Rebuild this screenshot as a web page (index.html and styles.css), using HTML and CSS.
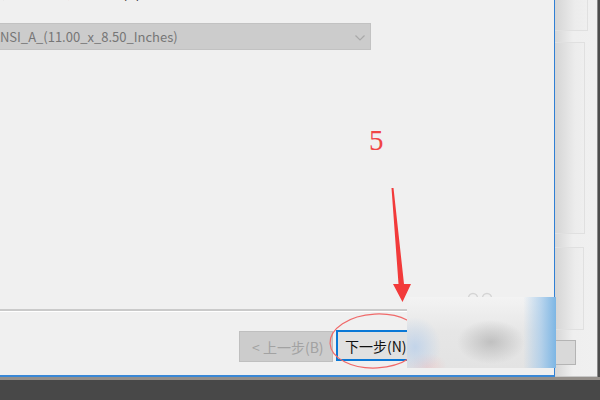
FILE: index.html
```html
<!DOCTYPE html>
<html lang="zh-CN">
<head>
    <meta charset="UTF-8">
    <title>添加打印机</title>
    <link rel="stylesheet" href="styles.css">
</head>
<body>
<div class="screen">
    <div class="desk">
        <div class="dialog">
            <div class="cut-label">选择默认纸张大小(S):</div>
            <div class="combo">
                <span>ANSI_A_(11.00_x_8.50_Inches)</span>
                <svg class="chevron" width="10" height="6" viewBox="0 0 10 6">
                    <polyline points="0.5,0.5 5,5 9.5,0.5" fill="none" stroke="#a9a9a9" stroke-width="1.2"/>
                </svg>
            </div>
            <div class="spacer"></div>
            <div class="sep"></div>
            <div class="footer">
                <button class="btn btn-off">&lt; 上一步(B)</button>
                <button class="btn btn-next">下一步(N)</button>
            </div>
        </div>
        <div class="side">
            <div class="box box-top"></div>
            <div class="box box-mid"></div>
            <div class="box box-low"></div>
            <div class="side-btn"></div>
        </div>
        <div class="edge"></div>
    </div>
    <div class="shadow-line"></div>
    <div class="taskbar"></div>

    <!-- annotation layer -->
    <svg class="marks" width="600" height="400" viewBox="0 0 600 400">
        <circle cx="473" cy="298" r="4.5" fill="none" stroke="#d4d4d4" stroke-width="1.5"/>
        <circle cx="487" cy="298" r="4.5" fill="none" stroke="#d4d4d4" stroke-width="1.5"/>
        <ellipse cx="376" cy="341" rx="46" ry="27" transform="rotate(-3 376 341)"
                 fill="none" stroke="#f06a6a" stroke-width="1.2"/>
        <polygon points="391.5,188 393.5,188 404,284 411,284 402.5,302 393,284 398.5,284" fill="#f23a3a"/>
    </svg>
    <div class="step">5</div>
    <div class="blur"></div>
</div>
</body>
</html>
```

FILE: styles.css
```css
body {
    margin: 0;
    padding: 0;
    background-color: #484848;
    font-family: "Noto Sans CJK SC", "Noto Sans", sans-serif;
}

.screen {
    position: relative;
    width: 600px;
    height: 400px;
    overflow: hidden;
}

.desk {
    display: flex;
    height: 377px;
    background-color: #f0f0f0;
}

/* dialog */
.dialog {
    width: 555px;
    display: flex;
    flex-direction: column;
    border-right: 1px solid #2f7fd4;
    border-bottom: 2px solid #3a88d6;
    background-color: #f0f0f0;
    box-sizing: border-box;
    height: 377px;
    overflow: hidden;
}

.cut-label {
    height: 18px;
    margin-top: -16px;
    font-size: 15px;
    line-height: 16px;
    color: #1a1a1a;
    padding-left: 2px;
    white-space: nowrap;
}

.combo {
    display: flex;
    align-items: center;
    justify-content: space-between;
    width: 388px;
    height: 27px;
    margin-top: 21px;
    margin-left: -17px;
    padding: 0 5px 0 8px;
    box-sizing: border-box;
    background-color: #cccccc;
    border: 1px solid #c2c2c2;
    font-size: 13px;
    color: #767676;
}

.chevron {
    display: block;
    margin-top: 2px;
}

.spacer {
    flex: 1;
}

.sep {
    height: 1px;
    border-top: 2px solid #cacaca;
    background-color: #ffffff;
}

.footer {
    display: flex;
    gap: 3px;
    padding: 18px 0 13px 239px;
}

.btn {
    height: 31px;
    font-family: "Noto Sans CJK SC", "Noto Sans", sans-serif;
    font-size: 14px;
    box-sizing: border-box;
    margin: 0;
    text-align: left;
}

.btn-off {
    width: 94px;
    background-color: #cccccc;
    border: 1px solid #bfbfbf;
    color: #a2a2a2;
    padding: 0 0 0 12px;
    margin-top: 1px;
}

.btn-next {
    width: 94px;
    background-color: #e1e1e1;
    border: 2px solid #0a78d6;
    color: #111111;
    padding: 0 0 0 7px;
}

/* right-hand window edge */
.side {
    flex: 1;
    display: flex;
    flex-direction: column;
    background: linear-gradient(to right, #d6d6d6, #efefef 18px, #f0f0f0);
    border-bottom: 1px solid #c8c8c8;
}

.box {
    border: 1px solid #e0e0e0;
    border-left: none;
    background: linear-gradient(to right, #d5d5d5, #ececec 20px, #efefef);
}

.box-top {
    width: 32px;
    height: 40px;
    margin-top: -11px;
}

.box-mid {
    width: 29px;
    height: 190px;
    margin-top: 11px;
}

.box-low {
    width: 28px;
    height: 81px;
    margin-top: 13px;
}

.side-btn {
    width: 20px;
    height: 23px;
    margin-top: 10px;
    border: 1px solid #b4b4b4;
    border-left: none;
    background-color: #d9d9d9;
}

.edge {
    width: 2px;
    background-color: #4c4c4c;
    border-left: 1px solid #8a8a8a;
}

.shadow-line {
    height: 3px;
    background-color: #948f8a;
}

.taskbar {
    height: 20px;
    background-color: #484848;
}

/* annotations */
.marks {
    position: absolute;
    left: 0;
    top: 0;
}

.step {
    position: absolute;
    left: 369px;
    top: 122px;
    font-family: "Liberation Serif", "DejaVu Serif", serif;
    font-size: 29px;
    line-height: 36px;
    color: #f04545;
}

.blur {
    position: absolute;
    left: 407px;
    top: 297px;
    width: 149px;
    height: 71px;
    background:
        radial-gradient(ellipse 34px 22px at 84px 45px, rgba(180, 180, 180, 0.75), rgba(200, 200, 200, 0) 100%),
        radial-gradient(ellipse 26px 30px at 8px 50px, rgba(180, 205, 235, 0.7), rgba(200, 220, 240, 0) 100%),
        radial-gradient(ellipse 20px 14px at 20px 70px, rgba(240, 190, 190, 0.5), rgba(240, 200, 200, 0) 100%),
        linear-gradient(to right, rgba(140, 190, 232, 0) 78%, rgba(160, 200, 235, 0.7) 90%, #7db6e4 100%),
        linear-gradient(to bottom, #f3f3f3, #e6e6e6 50%, #e3e3e3);
}
```
